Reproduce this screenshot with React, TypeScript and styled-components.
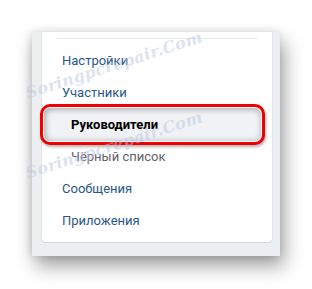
import styled, { createGlobalStyle } from 'styled-components';

const GlobalStyle = createGlobalStyle`
  html, body {
    margin: 0;
    padding: 0;
    background: #ffffff;
  }
  body {
    font-family: Roboto, "Open Sans", "Liberation Sans", sans-serif;
  }
`;

const Page = styled.div`
  position: relative;
  width: 312px;
  height: 289px;
  overflow: hidden;
  display: flex;
  align-items: flex-start;
  padding: 32px 0 0 32px;
  box-sizing: border-box;
`;

const Panel = styled.div`
  width: 248px;
  height: 224px;
  display: flex;
  flex-direction: column;
  background: #edeef0;
  padding: 0 8px 14px 10px;
  box-sizing: border-box;
  box-shadow: 4px 10px 18px rgba(0, 0, 0, 0.38), -2px 0 8px rgba(0, 0, 0, 0.12);
`;

const Card = styled.div`
  display: flex;
  flex-direction: column;
  gap: 5px;
  background: #ffffff;
  border-radius: 0 0 4px 4px;
  box-shadow: 0 1px 0 0 #d7d8db, 0 0 0 1px #e3e4e8;
  padding: 6px 0 6px;
`;

const Separator = styled.div`
  height: 1px;
  margin: 0 15px;
  background: #e7e8ec;
`;

const Menu = styled.ul`
  display: flex;
  flex-direction: column;
  list-style: none;
  margin: 0;
  padding: 0;
`;

const Item = styled.li<{ sub?: boolean; active?: boolean }>`
  position: relative;
  height: 32px;
  display: flex;
  align-items: center;
  padding-left: ${(p) => (p.sub ? '29px' : '20px')};
  font-size: 13px;
  font-weight: ${(p) => (p.active ? 700 : 400)};
  color: ${(p) => (p.active ? '#000000' : p.sub ? '#5f6368' : '#2a5885')};
`;

const Label = styled.span`
  position: relative;
  z-index: 2;
`;

const Frame = styled.div`
  position: absolute;
  left: -2px;
  right: 7px;
  top: -4px;
  bottom: -5px;
  z-index: 1;
  border: 3px solid #f00000;
  border-radius: 10px;
  background: #f0f2f5;
  box-shadow: inset 0 0 0 1px #ffffff, inset 1px 1px 6px 1px rgba(0, 0, 0, 0.35),
    1px 2px 3px rgba(0, 0, 0, 0.3);
`;

const Watermark = styled.div<{ x: number; y: number }>`
  position: absolute;
  left: ${(p) => p.x}px;
  top: ${(p) => p.y}px;
  transform: rotate(-18deg);
  transform-origin: left center;
  font-family: "DejaVu Serif", "Liberation Serif", serif;
  font-style: italic;
  font-weight: 700;
  font-size: 16px;
  letter-spacing: 0.3px;
  color: rgba(185, 198, 225, 0.5);
  white-space: nowrap;
  pointer-events: none;
  z-index: 5;
`;

const items = [
  { label: 'Настройки' },
  { label: 'Участники' },
  { label: 'Руководители', sub: true, active: true },
  { label: 'Чёрный список', sub: true },
  { label: 'Сообщения' },
  { label: 'Приложения' },
];

const App = () => {
  return (
    <>
      <GlobalStyle />
      <Page>
        <Panel>
          <Card>
            <Separator />
            <Menu>
              {items.map((it) => (
                <Item key={it.label} sub={it.sub} active={it.active}>
                  {it.active && <Frame />}
                  <Label>{it.label}</Label>
                </Item>
              ))}
            </Menu>
          </Card>
        </Panel>
        <Watermark x={26} y={84}>Soringpcrepair.Com</Watermark>
        <Watermark x={26} y={164}>Soringpcrepair.Com</Watermark>
      </Page>
    </>
  );
};

export default App;
